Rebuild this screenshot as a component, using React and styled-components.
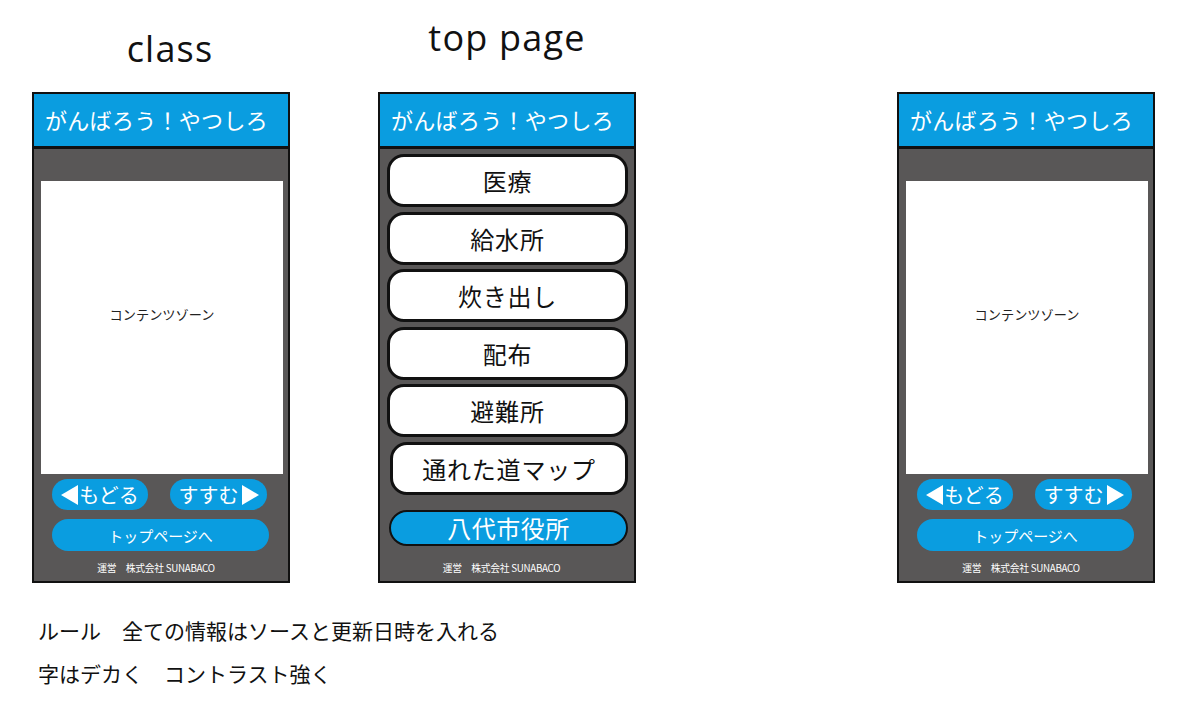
import React from "react";
import styled, { createGlobalStyle } from "styled-components";

const GlobalStyle = createGlobalStyle`
  html, body { margin: 0; padding: 0; background: #ffffff; }
  body { font-family: "Noto Sans CJK JP", "Noto Sans", sans-serif; color: #111; }
`;

const BLUE = "#0a9de0";
const GRAY = "#595757";

const Page = styled.div`
  width: 1200px;
  height: 715px;
  box-sizing: border-box;
  padding: 0 0 0 32px;
  display: flex;
  flex-direction: column;
`;

const Screens = styled.div`
  display: flex;
  align-items: flex-start;
  gap: 88px;
`;

const Column = styled.div`
  width: 258px;
  display: flex;
  flex-direction: column;
  margin-left: ${(p) => p.$shift || 0}px;
`;

const Caption = styled.div`
  height: 92px;
  box-sizing: border-box;
  padding-top: ${(p) => p.$top}px;
  padding-left: ${(p) => p.$left || 0}px;
  text-align: center;
  font-family: "Open Sans", "Noto Sans", sans-serif;
  font-size: 36px;
  line-height: 42px;
  color: #111;
  letter-spacing: 1.2px;
`;

const Phone = styled.div`
  width: 258px;
  height: 491px;
  box-sizing: border-box;
  border: 2px solid #111;
  background: ${GRAY};
  display: flex;
  flex-direction: column;
`;

const Header = styled.div`
  height: 55px;
  box-sizing: border-box;
  background: ${BLUE};
  border-bottom: 3px solid #111;
  color: #fff;
  font-size: 22px;
  padding: 0 0 2px 11px;
  display: flex;
  align-items: center;
  letter-spacing: 0.3px;
  white-space: nowrap;
`;

const Body = styled.div`
  flex: 1;
  display: flex;
  flex-direction: column;
  padding: ${(p) => (p.$menu ? "5px 6px 0 7px" : "32px 5px 0 7px")};
`;

const ContentZone = styled.div`
  height: 293px;
  background: #fff;
  display: flex;
  align-items: center;
  justify-content: center;
  font-size: 13.2px;
  color: #222;
  padding-bottom: 26px;
  box-sizing: border-box;
`;

const NavArea = styled.div`
  display: flex;
  flex-direction: column;
  gap: 9px;
  padding: 5px 14px 0 11px;
`;

const NavRow = styled.div`
  display: flex;
  justify-content: space-between;
  padding-right: 2px;
`;

const Pill = styled.div`
  height: ${(p) => p.$h}px;
  width: ${(p) => (p.$w ? `${p.$w}px` : "auto")};
  border-radius: 999px;
  background: ${BLUE};
  color: #fff;
  font-size: ${(p) => p.$fs}px;
  display: flex;
  align-items: center;
  justify-content: center;
  white-space: nowrap;
`;

const Arrow = styled.span`
  display: inline-block;
  width: 0;
  height: 0;
  border-top: 10px solid transparent;
  border-bottom: 10px solid transparent;
  ${(p) =>
    p.$dir === "left"
      ? `border-right: 17px solid #fff; margin-right: 1px;`
      : `border-left: 17px solid #fff; margin-left: 3px;`}
`;

const Footer = styled.div`
  flex: 1;
  display: flex;
  align-items: center;
  justify-content: center;
  color: #fff;
  font-size: 9.8px;
  letter-spacing: -0.3px;
  padding-right: 12px;
  padding-top: ${(p) => (p.$menu ? 9 : 4)}px;
`;

const MenuList = styled.div`
  display: flex;
  flex-direction: column;
  gap: 4.6px;
`;

const MenuButton = styled.div`
  height: 53px;
  box-sizing: border-box;
  border: 3px solid #111;
  border-radius: 17px;
  background: #fff;
  display: flex;
  align-items: center;
  justify-content: center;
  font-size: 24px;
  color: #111;
  margin-left: ${(p) => p.$nudge || 0}px;
  letter-spacing: 0.8px;
`;

const CityHall = styled.div`
  margin-top: 15px;
  margin-left: 2px;
  height: 36px;
  box-sizing: border-box;
  border: 2.5px solid #111;
  border-radius: 999px;
  background: ${BLUE};
  color: #fff;
  font-size: 24px;
  display: flex;
  align-items: center;
  justify-content: center;
  letter-spacing: 0.5px;
`;

const Rules = styled.div`
  margin-top: 26px;
  padding-left: 6px;
  font-size: 21px;
  line-height: 43px;
  color: #111;
`;

const TITLE = "がんばろう！やつしろ";
const FOOTER = "運営　株式会社 SUNABACO";

function ContentScreen() {
  return (
    <Phone>
      <Header>{TITLE}</Header>
      <Body>
        <ContentZone>コンテンツゾーン</ContentZone>
        <NavArea>
          <NavRow>
            <Pill $h={31} $w={96} $fs={20}>
              <Arrow $dir="left" />
              もどる
            </Pill>
            <Pill $h={31} $w={97} $fs={20}>
              すすむ
              <Arrow $dir="right" />
            </Pill>
          </NavRow>
          <Pill $h={32} $fs={15}>
            トップページへ
          </Pill>
        </NavArea>
        <Footer>{FOOTER}</Footer>
      </Body>
    </Phone>
  );
}

const MENU = ["医療", "給水所", "炊き出し", "配布", "避難所", "通れた道マップ"];

function TopScreen() {
  return (
    <Phone>
      <Header>{TITLE}</Header>
      <Body $menu>
        <MenuList>
          {MENU.map((label, i) => (
            <MenuButton key={label} $nudge={i === MENU.length - 1 ? 3 : 0}>
              {label}
            </MenuButton>
          ))}
        </MenuList>
        <CityHall>八代市役所</CityHall>
        <Footer $menu>{FOOTER}</Footer>
      </Body>
    </Phone>
  );
}

export default function App() {
  return (
    <>
      <GlobalStyle />
      <Page>
        <Screens>
          <Column>
            <Caption $top={28} $left={18}>class</Caption>
            <ContentScreen />
          </Column>
          <Column>
            <Caption $top={17}>top page</Caption>
            <TopScreen />
          </Column>
          <Column $shift={173}>
            <Caption $top={0} />
            <ContentScreen />
          </Column>
        </Screens>
        <Rules>
          <div>ルール　全ての情報はソースと更新日時を入れる</div>
          <div>字はデカく　コントラスト強く</div>
        </Rules>
      </Page>
    </>
  );
}
